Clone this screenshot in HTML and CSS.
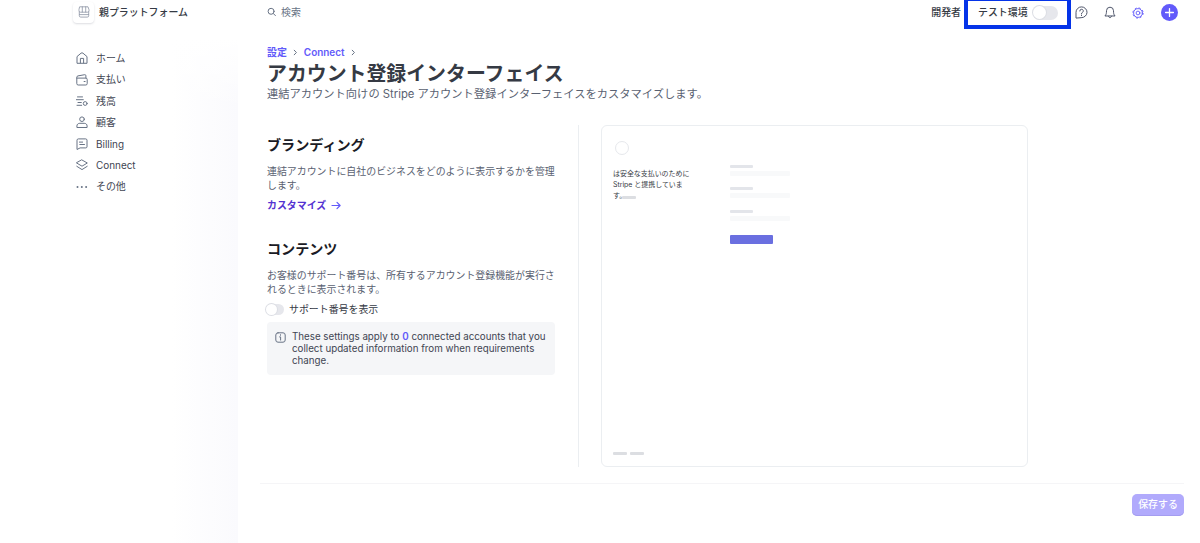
FILE: index.html
```
<!DOCTYPE html>
<html lang="ja">
<head>
	<meta charset="UTF-8" />
	<title>アカウント登録インターフェイス</title>
	<link rel="stylesheet" href="styles.css">
</head>
<body>
	<div class="wrap">
		<div class="sidebar">
			<div class="brand">
				<span class="brand-icon">
					<svg width="12" height="12" viewBox="0 0 12 12"><path d="M2 .8h8l1 3v1a1.400 1.400 0 0 1-1.400 1.400H2.400A1.400 1.400 0 0 1 1 4.800v-1zM4.300.8v5.200M7.700.8v5.200M1.300 6v3.700a1.400 1.400 0 0 0 1.400 1.400h6.600a1.400 1.400 0 0 0 1.400-1.400V6M1.500 8.600h9"/></svg>
				</span>
				<span class="brand-name">親プラットフォーム</span>
			</div>
			<ul class="menu">
				<li><svg width="12" height="12" viewBox="0 0 12 12"><path d="M1 10.900V4.600L5 1.200a1.600 1.600 0 0 1 2 0l4 3.400v6.300zM4.400 10.900V6.400h3.200v4.500"/></svg>ホーム</li>
				<li><svg width="12" height="12" viewBox="0 0 12 12"><path d="M.8 4.100h9a1.400 1.400 0 0 1 1.400 1.400v4.100A1.400 1.400 0 0 1 9.800 11H2.200A1.400 1.400 0 0 1 .8 9.600V3.200c0-.7.5-1.200 1.200-1.300L8.700.7c.7-.1 1.200.3 1.200 1v2.400M8.100 7.500h1"/></svg>支払い</li>
				<li><svg width="12" height="12" viewBox="0 0 12 12"><path d="M1.500 1.900h5M.3 4.700h7M2 7.500h3.300M1 10.300h4.700"/><circle cx="9.200" cy="8.500" r="1.900"/></svg>残高</li>
				<li><svg width="12" height="12" viewBox="0 0 12 12"><circle cx="6" cy="3.200" r="2.300"/><path d="M.9 11.100V10c0-1.700 1.300-2.700 2.900-2.700h4.400c1.600 0 2.900 1 2.900 2.700v1.100z"/></svg>顧客</li>
				<li><svg width="12" height="12" viewBox="0 0 12 12"><path d="M1 11.100V2.200c0-.8.500-1.300 1.300-1.300h7.400c.8 0 1.300.5 1.300 1.300v6.600c0 .7-.5 1.100-1.200 1.100H4.500zM3.400 4.100h3.200M3.800 6.500h4.700"/></svg>Billing</li>
				<li><svg width="12" height="12" viewBox="0 0 12 12"><path d="M6 1l5.300 3L6 7.200.7 4zM.8 7.300L6 10.600l5.200-3.300"/></svg>Connect</li>
				<li><svg class="dots" width="12" height="12" viewBox="0 0 12 12"><circle cx="1.500" cy="6" r="1"/><circle cx="5.800" cy="6" r="1"/><circle cx="10.100" cy="6" r="1"/></svg>その他</li>
			</ul>
		</div>
		<div class="main">
			<div class="header">
				<div class="search">
					<svg width="10" height="10" viewBox="0 0 10 10"><circle cx="4.100" cy="4.300" r="3"/><path d="M6.400 6.600l2 2"/></svg>
					検索
				</div>
				<div class="tools">
					<span class="dev">開発者</span>
					<div class="test-mode">テスト環境<span class="switch switch-lg"></span></div>
					<svg class="help" width="13" height="13" viewBox="0 0 13 13"><path d="M1 11.700V6.300a5.500 5.400 0 1 1 5.500 5.400zM4.800 5a1.750 1.700 0 1 1 2.500 1.500c-.6.3-.8.6-.8 1.100M6.500 9v.6"/></svg>
					<svg class="bell" width="12" height="13" viewBox="0 0 12 13"><path d="M1.200 9.700c1.300-1.300 1.200-2.600 1.300-5A3.500 3.600 0 0 1 6 1.200a3.500 3.600 0 0 1 3.500 3.500c.1 2.400 0 3.700 1.300 5zM4.500 10.300c.2 1.900 2.800 1.900 3 0"/></svg>
					<svg class="gear" width="12" height="12" viewBox="0 0 12 12"><circle class="teeth" cx="6" cy="6" r="5.100"/><circle cx="6" cy="6" r="4.400"/><circle cx="6" cy="6" r="1.900"/></svg>
					<span class="plus"><svg width="17" height="17" viewBox="0 0 17 17"><path d="M8.500 4.600v7.800M4.600 8.500h7.800"/></svg></span>
				</div>
			</div>
			<div class="crumbs">
				<a>設定</a>
				<svg width="5" height="7" viewBox="0 0 5 7"><path d="M1.200 1.200l2.200 2.300-2.200 2.300"/></svg>
				<a>Connect</a>
				<svg width="5" height="7" viewBox="0 0 5 7"><path d="M1.200 1.200l2.200 2.300-2.200 2.300"/></svg>
			</div>
			<h1>アカウント登録インターフェイス</h1>
			<p class="lead">連結アカウント向けの Stripe アカウント登録インターフェイスをカスタマイズします。</p>
			<div class="content">
				<div class="settings">
					<h2>ブランディング</h2>
					<p>連結アカウントに自社のビジネスをどのように表示するかを管理します。</p>
					<a class="customize">カスタマイズ
						<svg width="11" height="9" viewBox="0 0 11 9"><path d="M1 4.500h8M6 1.400l3.100 3.100L6 7.600"/></svg>
					</a>
					<h2 class="second">コンテンツ</h2>
					<p>お客様のサポート番号は、所有するアカウント登録機能が実行されるときに表示されます。</p>
					<div class="support"><span class="switch"></span>サポート番号を表示</div>
					<div class="notice">
						<svg width="11" height="11" viewBox="0 0 11 11"><rect x=".8" y=".8" width="9.400" height="9.400" rx="2.200"/><path d="M4.600 4.900h1v3.200M5.500 2.700v.6"/></svg>
						<div>These settings apply to <b>0</b> connected accounts that you collect updated information from when requirements change.</div>
					</div>
				</div>
				<div class="preview">
					<div class="preview-left">
						<div class="avatar"></div>
						<div class="preview-text">は安全な支払いのために<br>Stripe と提携していま<br>す。<span class="dash"></span></div>
						<div class="preview-foot"><span class="dash"></span><span class="dash"></span></div>
					</div>
					<div class="preview-form">
						<div class="field"></div>
						<div class="field"></div>
						<div class="field"></div>
						<div class="submit"></div>
					</div>
				</div>
			</div>
			<div class="footer">
				<button class="save">保存する</button>
			</div>
		</div>
	</div>
</body>
</html>
```
FILE: styles.css
```
*{
	box-sizing:border-box;
}
body,h1,h2,p,ul{
	margin:0;
	padding:0;
}
body{
	background-color: #fff;
	color:#414552;
	font:9.93px/14.2px Inter,"Noto Sans CJK JP",sans-serif;
}
svg{
	flex:none;
	fill:none;
	stroke:#687385;
	stroke-width:1;
	stroke-linecap:round;
	stroke-linejoin:round;
}
.wrap{
	display:flex;
	height:543px;
	overflow:hidden;
}
/* 左侧导航 */
.sidebar{
	width:238px;
	flex:none;
	background:linear-gradient(#fff 38px,rgba(255,255,255,0) 110px),linear-gradient(90deg,#fff 172px,#fafafd 238px);
}
.brand{
	display:flex;
	align-items:center;
	height:24px;
	padding-left:73px;
	color:#353a44;
	font-weight:500;
}
.brand-icon{
	display:flex;
	align-items:center;
	justify-content:center;
	width:21px;
	height:21px;
	margin-right:5px;
	border-radius:4px;
	background-color:#fff;
	box-shadow:0 1px 2px rgba(60,66,87,.18);
}
.brand-icon svg{
	stroke:#8c93a3;
	stroke-width:.8;
}
.menu{
	list-style:none;
	padding:23.5px 0 0 76px;
}
.menu li{
	display:flex;
	align-items:center;
	gap:8px;
	height:21.4px;
}
.menu .dots{
	fill:#687385;
	stroke:none;
}
.main{
	flex:1;
	padding:0 16px 0 29px;
}
.header{
	display:flex;
	justify-content:space-between;
	align-items:flex-start;
	height:45px;
}
.search,.tools{
	display:flex;
	align-items:center;
	height:25px;
}
.search{
	gap:4px;
	height:24px;
	color:#687385;
}
.tools{
	color:#353a44;
	font-weight:500;
}
.tools svg{
	stroke:#4f566b;
}
/* 测试环境 */
.test-mode{
	display:flex;
	align-items:center;
	justify-content:space-between;
	align-self:flex-start;
	width:107px;
	height:29px;
	margin:0 4px 0 3px;
	padding:0 9px 1px 10px;
	border:4px solid #0433e8;
	border-top-width:1px;
}
.switch{
	width:18px;
	height:11px;
	border-radius:6px;
	background-color:#e6e7ec;
}
.switch:before{
	content:"";
	display:block;
	width:11px;
	height:11px;
	border-radius:50%;
	background-color:#fff;
	box-shadow:0 0 0 1px #dcdee4;
}
.switch-lg{
	width:25px;
	height:14px;
	border-radius:7px;
}
.switch-lg:before{
	width:13px;
	height:13px;
	margin-top:.5px;
}
.tools .bell{
	margin-left:16px;
}
.tools .gear{
	margin:0 17px 0 16px;
	stroke:#625afa;
	stroke-width:.9;
}
.gear .teeth{
	stroke-width:1;
	stroke-dasharray:2 2.005;
	stroke-linecap:butt;
}
.plus{
	width:17px;
	height:17px;
	margin-right:6px;
	border-radius:50%;
	background-color:#625afa;
}
.tools .plus svg{
	display:block;
	stroke:#fff;
	stroke-width:1.3;
}
.crumbs{
	display:flex;
	align-items:center;
	gap:6px;
	height:15px;
	color:#625afa;
	font-weight:600;
}
h1{
	height:26px;
	color:#353a44;
	font-size:19.9px;
	line-height:28px;
	font-weight:600;
}
.lead{
	height:39px;
	font-size:11.27px;
	line-height:16px;
	white-space:nowrap;
	color:#596171;
}
.content{
	display:flex;
	height:342px;
}
.settings{
	width:312px;
	padding:10px 23px 0 0;
	border-right:1px solid #ebeef1;
}
h2{
	height:20px;
	margin-bottom:9px;
	color:#1a1b25;
	font-size:14.1px;
	line-height:20px;
	font-weight:700;
}
h2.second{
	margin-top:26px;
}
.settings p{
	color:#596171;
}
.customize{
	display:flex;
	align-items:center;
	gap:5px;
	margin-top:6px;
	color:#5433d1;
	font-weight:600;
}
.customize svg{
	stroke:#625afa;
	stroke-width:1.2;
}
.support{
	display:flex;
	align-items:center;
	gap:5px;
	height:14px;
	margin:6px 0 5.500px -1px;
	color:#353a44;
}
.notice{
	display:flex;
	gap:6px;
	height:53px;
	padding:9px 6px 9px 8px;
	border-radius:4px;
	background-color:#f5f6f8;
	font-size:9.78px;
	line-height:12.1px;
}
.notice svg{
	margin-top:1px;
}
.notice b{
	color:#625afa;
	font-weight:600;
}
/* 预览 */
.preview{
	display:flex;
	width:427px;
	margin-left:22px;
	border:1px solid #ebeef1;
	border-radius:6px;
}
.preview-left{
	display:flex;
	flex-direction:column;
	width:127.500px;
	padding:15px 0 11px 11px;
}
.avatar{
	width:14px;
	height:14px;
	margin:0 0 14px 2px;
	border:1px solid #e6e8ec;
	border-radius:50%;
}
.preview-text{
	color:#353a44;
	font-size:6.95px;
	line-height:10.9px;
}
.dash{
	display:inline-block;
	width:14px;
	height:3px;
	border-radius:1px;
	background-color:#dcdee2;
}
.preview-text .dash{
	margin-left:-4px;
	vertical-align:-1px;
}
.preview-foot{
	display:flex;
	gap:3px;
	margin-top:auto;
}
.preview-form{
	padding-top:38.500px;
}
.field{
	width:60px;
	height:22.7px;
}
.field:before,.field:after{
	content:"";
	display:block;
	border-radius:1px;
}
.field:before{
	width:23px;
	height:3px;
	margin-bottom:3px;
	background-color:#e3e5ea;
}
.field:after{
	height:5px;
	background-color:#f8f9fa;
}
.submit{
	width:43px;
	height:9px;
	margin-top:2px;
	border-radius:1px;
	background-color:#6a6fe0;
}
.footer{
	display:flex;
	justify-content:flex-end;
	margin:16px 0 0 -7px;
	padding-top:10px;
	border-top:1px solid #f5f5f7;
}
.save{
	width:52px;
	height:22px;
	padding:0 0 2px;
	border:0;
	border-radius:5px;
	background-color:#b1aafc;
	box-shadow:inset 0 -1px #a49df0;
	color:#fff;
	font:inherit;
	font-weight:500;
}
```
